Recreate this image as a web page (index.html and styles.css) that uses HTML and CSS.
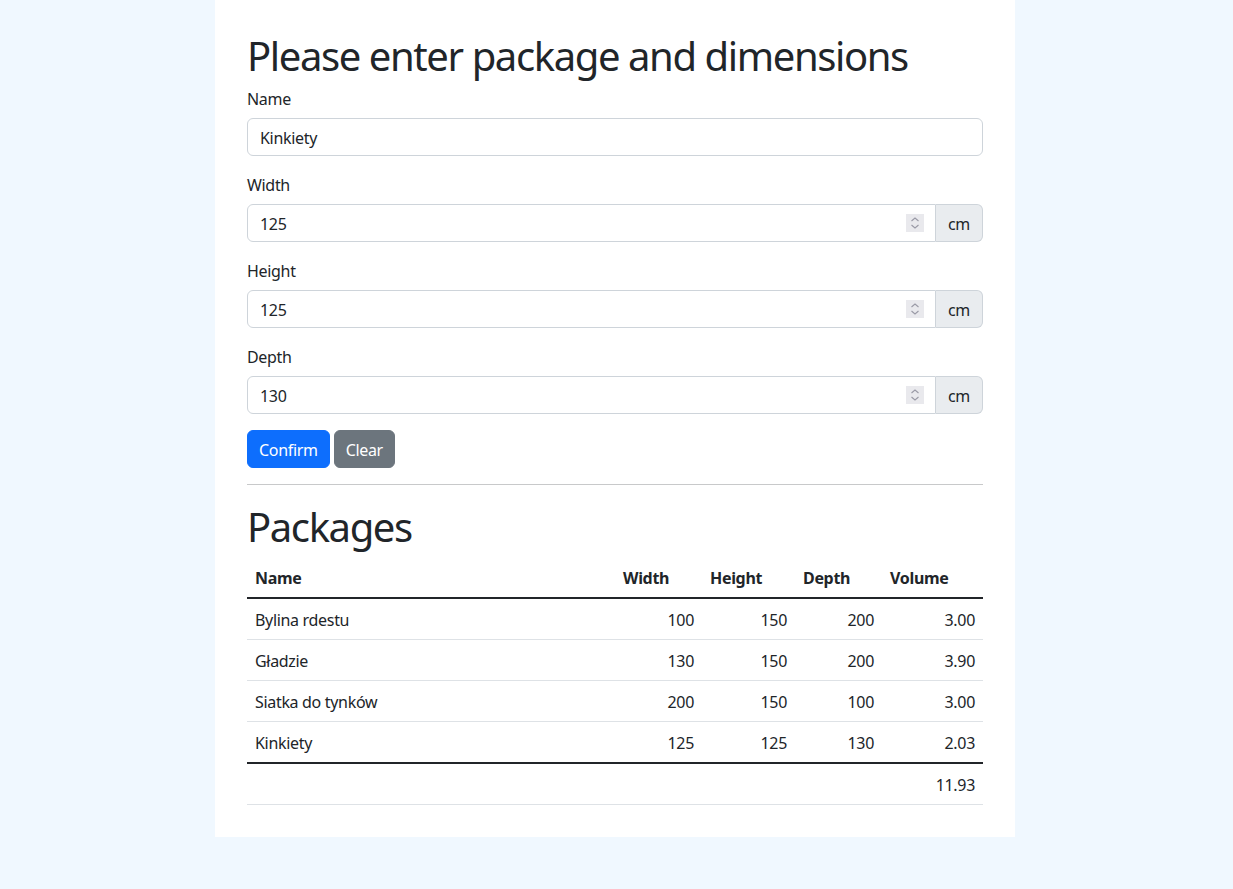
FILE: index.html
```html
<!DOCTYPE html>
<html lang="en">
<head>
<meta charset="utf-8">
<title>Packages</title>
<link rel="stylesheet" href="styles.css">
</head>
<body>
<main class="container">
  <h1 class="title">Please enter package and dimensions</h1>
  <form class="form">
    <div class="field">
      <label class="form-label" for="name">Name</label>
      <input class="form-control" id="name" type="text" value="Kinkiety">
    </div>
    <div class="field">
      <label class="form-label" for="width">Width</label>
      <div class="input-group">
        <div class="num-wrap">
          <input class="form-control num" id="width" type="number" value="125">
          <svg class="spinner" width="18" height="18" viewBox="0 0 18 18"><rect width="18" height="18" fill="#e9e9ed"/><path d="M5.5 7 9 4 12.5 7M5.5 11 9 14 12.5 11" fill="none" stroke="#9a9aa6" stroke-width="1.1"/></svg>
        </div>
        <span class="input-group-text">cm</span>
      </div>
    </div>
    <div class="field">
      <label class="form-label" for="height">Height</label>
      <div class="input-group">
        <div class="num-wrap">
          <input class="form-control num" id="height" type="number" value="125">
          <svg class="spinner" width="18" height="18" viewBox="0 0 18 18"><rect width="18" height="18" fill="#e9e9ed"/><path d="M5.5 7 9 4 12.5 7M5.5 11 9 14 12.5 11" fill="none" stroke="#9a9aa6" stroke-width="1.1"/></svg>
        </div>
        <span class="input-group-text">cm</span>
      </div>
    </div>
    <div class="field">
      <label class="form-label" for="depth">Depth</label>
      <div class="input-group">
        <div class="num-wrap">
          <input class="form-control num" id="depth" type="number" value="130">
          <svg class="spinner" width="18" height="18" viewBox="0 0 18 18"><rect width="18" height="18" fill="#e9e9ed"/><path d="M5.5 7 9 4 12.5 7M5.5 11 9 14 12.5 11" fill="none" stroke="#9a9aa6" stroke-width="1.1"/></svg>
        </div>
        <span class="input-group-text">cm</span>
      </div>
    </div>
    <div class="actions">
      <button type="button" class="btn btn-primary">Confirm</button>
      <button type="button" class="btn btn-secondary">Clear</button>
    </div>
  </form>
  <hr class="divider">
  <h1 class="title">Packages</h1>
  <table class="table">
    <colgroup>
      <col class="c-name"><col class="c-w"><col class="c-h"><col class="c-d"><col class="c-v">
    </colgroup>
    <thead>
      <tr><th>Name</th><th>Width</th><th>Height</th><th>Depth</th><th>Volume</th></tr>
    </thead>
    <tbody>
      <tr><td>Bylina rdestu</td><td class="num-cell">100</td><td class="num-cell">150</td><td class="num-cell">200</td><td class="num-cell">3.00</td></tr>
      <tr><td>Gładzie</td><td class="num-cell">130</td><td class="num-cell">150</td><td class="num-cell">200</td><td class="num-cell">3.90</td></tr>
      <tr><td>Siatka do tynków</td><td class="num-cell">200</td><td class="num-cell">150</td><td class="num-cell">100</td><td class="num-cell">3.00</td></tr>
      <tr><td>Kinkiety</td><td class="num-cell">125</td><td class="num-cell">125</td><td class="num-cell">130</td><td class="num-cell">2.03</td></tr>
    </tbody>
    <tfoot>
      <tr><td></td><td></td><td></td><td></td><td class="num-cell">11.93</td></tr>
    </tfoot>
  </table>
</main>
</body>
</html>
```
FILE: styles.css
```css
* { box-sizing: border-box; }

html, body {
  margin: 0;
  background: #f0f8ff;
}

body {
  font-family: "Noto Sans", "Open Sans", sans-serif;
  font-size: 16px;
  line-height: 24px;
  color: #212529;
  letter-spacing: -0.02em;
}

.container {
  width: 800px;
  margin: 0 0 0 215px;
  background: #fff;
  padding: 30px 32px 16px;
}

.title {
  font-size: 40px;
  line-height: 48px;
  font-weight: 400;
  margin: 0 0 6px;
  padding-top: 2px;
  letter-spacing: -0.035em;
}

.form { margin: 0; }

.field { margin-bottom: 16px; }

.form-label {
  display: block;
  padding-top: 1px;
  margin-bottom: 7px;
}

.form-control {
  display: block;
  width: 100%;
  height: 38px;
  padding: 7px 12px 5px;
  font: inherit;
  letter-spacing: inherit;
  color: #212529;
  background: #fff;
  border: 1px solid #ced4da;
  border-radius: 6px;
  outline: none;
}

.input-group {
  display: flex;
  align-items: stretch;
}

.num-wrap {
  position: relative;
  flex: 1 1 auto;
}

.num {
  border-top-right-radius: 0;
  border-bottom-right-radius: 0;
  -moz-appearance: textfield;
}

.num::-webkit-inner-spin-button,
.num::-webkit-outer-spin-button {
  -webkit-appearance: none;
  margin: 0;
}

.spinner {
  position: absolute;
  right: 12px;
  top: 10px;
}

.input-group-text {
  display: flex;
  align-items: center;
  padding: 7px 12px 5px;
  background: #e9ecef;
  border: 1px solid #ced4da;
  border-left: 0;
  border-radius: 0 6px 6px 0;
}

.actions {
  display: flex;
  gap: 4px;
}

.btn {
  font: inherit;
  letter-spacing: inherit;
  height: 38px;
  padding: 7px 11px 5px;
  border: 1px solid transparent;
  border-radius: 6px;
  color: #fff;
  cursor: pointer;
}

.btn-primary { background: #0d6efd; border-color: #0d6efd; }
.btn-secondary { background: #6c757d; border-color: #6c757d; }

.divider {
  margin: 16px 0;
  border: 0;
  border-top: 1px solid #c8c9ca;
}

.table {
  width: 100%;
  border-collapse: collapse;
  table-layout: fixed;
  margin-bottom: 16px;
}

.c-name { width: 368px; }
.c-w { width: 87px; }
.c-h { width: 93px; }
.c-d { width: 87px; }
.c-v { width: 101px; }

.table th,
.table td {
  padding: 9px 8px 7px;
  text-align: left;
  border-bottom: 1px solid #dee2e6;
}

.table th {
  font-weight: 700;
  border-bottom: 2px solid #212529;
}

.table tfoot td {
  border-top: 2px solid #212529;
}

.table .num-cell { text-align: right; }
```
